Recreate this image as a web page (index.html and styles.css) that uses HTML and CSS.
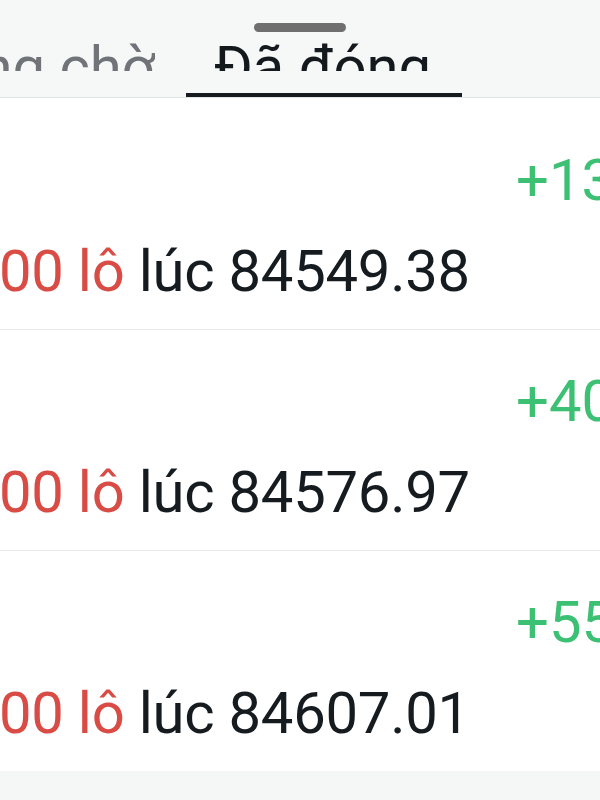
FILE: index.html
```html
<!DOCTYPE html>
<html lang="vi">
<head>
<meta charset="utf-8">
<title>Lệnh đã đóng</title>
<link rel="stylesheet" href="styles.css">
</head>
<body>
<div class="sheet">
  <header class="header">
    <div class="handle"></div>
    <nav class="tabs">
      <div class="tab tab-first">
        <span class="tab-label">Đang chờ</span>
        <span class="tab-bar"></span>
      </div>
      <div class="tab tab-active">
        <span class="tab-label">Đã đóng</span>
        <span class="tab-bar"></span>
      </div>
    </nav>
  </header>
  <main class="list">
    <div class="row">
      <div class="row-top"><span class="pnl">+13.26</span></div>
      <div class="row-bottom"><span class="lots">00 lô</span> lúc 84549.38</div>
    </div>
    <div class="row">
      <div class="row-top"><span class="pnl">+40.87</span></div>
      <div class="row-bottom"><span class="lots">00 lô</span> lúc 84576.97</div>
    </div>
    <div class="row row-last">
      <div class="row-top"><span class="pnl">+55.14</span></div>
      <div class="row-bottom"><span class="lots">00 lô</span> lúc 84607.01</div>
    </div>
  </main>
  <footer class="footer"></footer>
</div>
</body>
</html>
```
FILE: styles.css
```css
html, body {
  margin: 0;
  padding: 0;
  background: #ffffff;
  overflow: hidden;
}
body {
  width: 600px;
  height: 800px;
  font-family: Roboto, "Noto Sans", "Liberation Sans", sans-serif;
}
.sheet {
  display: flex;
  flex-direction: column;
  height: 800px;
  overflow: hidden;
}
.header {
  background: #f6f8f8;
  border-bottom: 1px solid #e2e5e5;
  height: 97px;
  display: flex;
  flex-direction: column;
  flex: none;
}
.handle {
  width: 92px;
  height: 9px;
  border-radius: 5px;
  background: #6f6f6f;
  margin: 23px auto 0;
}
.tabs {
  display: flex;
  margin-top: 1px;
  margin-left: -118px;
}
.tab {
  flex: none;
  display: flex;
  flex-direction: column;
  padding: 0 31px 0 28px;
}
.tab-label {
  display: block;
  height: 38px;
  overflow: hidden;
  font-size: 58px;
  line-height: 68px;
  white-space: nowrap;
  color: #707478;
}
.tab-bar {
  display: block;
  height: 4px;
  margin: 22px -31px 0 -28px;
}
.tab-active .tab-label {
  color: #14191e;
}
.tab-active .tab-bar {
  background: #161b20;
}
.list {
  flex: none;
  padding-top: 11px;
  background: #ffffff;
}
.row {
  padding: 37px 0 24px;
  border-bottom: 1px solid #e8e9e9;
  font-size: 58px;
  line-height: 68px;
  white-space: nowrap;
}
.row-last {
  border-bottom: none;
}
.row-top {
  display: flex;
  justify-content: flex-end;
}
.pnl {
  width: 84px;
  overflow: hidden;
  color: #3cc073;
}
.row-bottom {
  margin-top: 23px;
  margin-left: -1px;
  letter-spacing: -0.25px;
  color: #161b20;
}
.lots {
  color: #d94c45;
}
.footer {
  flex: 1;
  background: #f5f7f7;
}
```
